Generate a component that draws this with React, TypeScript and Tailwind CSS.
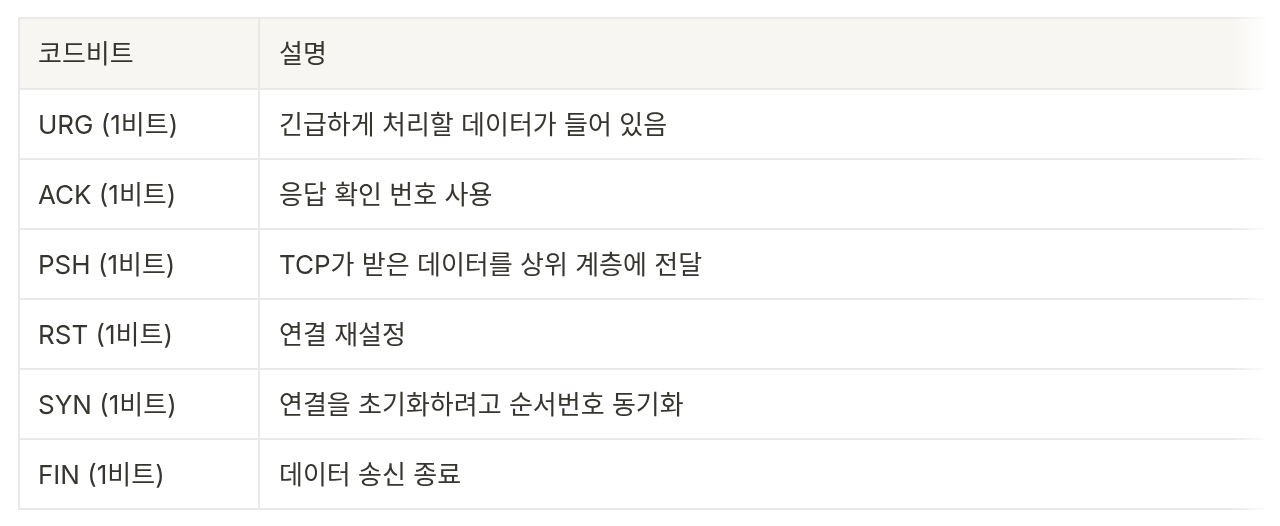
const rows: [string, string][] = [
  ["URG (1비트)", "긴급하게 처리할 데이터가 들어 있음"],
  ["ACK (1비트)", "응답 확인 번호 사용"],
  ["PSH (1비트)", "TCP가 받은 데이터를 상위 계층에 전달"],
  ["RST (1비트)", "연결 재설정"],
  ["SYN (1비트)", "연결을 초기화하려고 순서번호 동기화"],
  ["FIN (1비트)", "데이터 송신 종료"],
];

export default function App() {
  return (
    <div className="h-[526px] w-[1280px] bg-white pt-[17px] pl-[18px] font-['Inter','Noto_Sans_CJK_KR',sans-serif] text-[26px] text-[#37352f]">
      <div className="w-[1250px] [mask-image:linear-gradient(to_right,black_calc(100%-36px),transparent)]">
        <table className="w-full border-collapse">
          <thead>
            <tr className="h-[71px] bg-[#f7f6f3]">
              <th className="w-[240px] border-2 border-[#e9e9e7] pl-[18px] text-left font-normal">
                코드비트
              </th>
              <th className="border-2 border-r-0 border-[#e9e9e7] pl-[19px] text-left font-normal">
                설명
              </th>
            </tr>
          </thead>
          <tbody>
            {rows.map(([code, desc]) => (
              <tr key={code} className="h-[70px]">
                <td className="border-2 border-[#e9e9e7] pl-[18px]">{code}</td>
                <td className="border-2 border-r-0 border-[#e9e9e7] pl-[19px]">{desc}</td>
              </tr>
            ))}
          </tbody>
        </table>
      </div>
    </div>
  );
}
